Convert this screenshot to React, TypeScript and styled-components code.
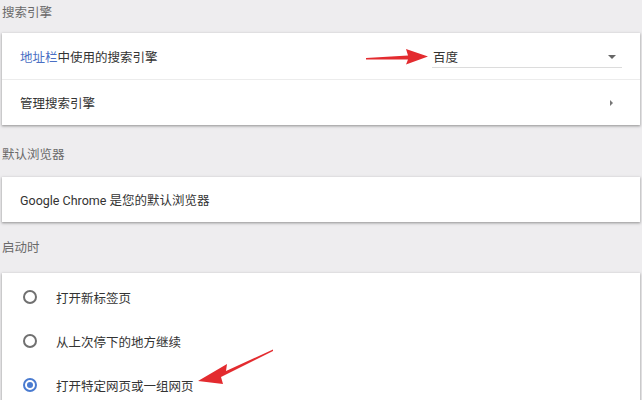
import React from 'react';
import styled, { createGlobalStyle } from 'styled-components';

const GlobalStyle = createGlobalStyle`
  html, body {
    margin: 0;
    padding: 0;
    background: #eeedef;
    overflow: hidden;
  }
  body {
    font-family: Roboto, "Noto Sans CJK SC", sans-serif;
    font-size: 12.5px;
    color: #333;
  }
`;

const Page = styled.div`
  position: relative;
  width: 642px;
  height: 400px;
  padding: 0 2px;
  box-sizing: border-box;
  overflow: hidden;
`;

const Heading = styled.div<{ $top: number; $bottom: number }>`
  padding: ${p => p.$top}px 0 ${p => p.$bottom}px 0;
  line-height: 20px;
  color: #6a6a6a;
`;

const Card = styled.div`
  background: #fff;
  box-shadow: 0 1px 2px rgba(0, 0, 0, 0.28), 0 1px 3px 1px rgba(0, 0, 0, 0.1);
`;

const Row = styled.div<{ $h: number; $divider?: boolean }>`
  display: flex;
  align-items: center;
  height: ${p => p.$h}px;
  padding: 0 18px;
  border-top: ${p => (p.$divider ? '1px solid #ececec' : 'none')};
  box-sizing: border-box;
`;

const Label = styled.span`
  flex: 1;
`;

const Link = styled.span`
  color: #4a6fc4;
`;

const Select = styled.div`
  width: 190px;
  height: 22px;
  margin-top: 2px;
  display: flex;
  align-items: center;
  justify-content: space-between;
  padding: 0 0 0 1px;
  border-bottom: 1px solid #dcdcdc;
  box-sizing: border-box;
`;

const Caret = styled.span`
  width: 0;
  height: 0;
  margin-right: 6px;
  border-left: 4px solid transparent;
  border-right: 4px solid transparent;
  border-top: 4px solid #666;
`;

const SubArrow = styled.span`
  width: 0;
  height: 0;
  margin-right: 9px;
  border-top: 3.5px solid transparent;
  border-bottom: 3.5px solid transparent;
  border-left: 3.5px solid #777;
`;

const RadioList = styled(Card)`
  padding-top: 2px;
`;

const RadioRow = styled.div`
  display: flex;
  align-items: center;
  height: 44px;
  padding-left: 21px;
  gap: 19px;
`;

const Radio = styled.span<{ $on?: boolean }>`
  width: 14px;
  height: 14px;
  border-radius: 50%;
  border: 2px solid ${p => (p.$on ? '#4a7bd0' : '#707070')};
  box-sizing: border-box;
  display: flex;
  align-items: center;
  justify-content: center;
  &::after {
    content: '';
    display: ${p => (p.$on ? 'block' : 'none')};
    width: 6px;
    height: 6px;
    border-radius: 50%;
    background: #4a7bd0;
  }
`;

const Annotation = styled.svg`
  position: absolute;
  pointer-events: none;
`;

const RedArrow: React.FC<{ x: number; y: number; w: number; h: number; d: string }> = ({ x, y, w, h, d }) => (
  <Annotation style={{ left: x, top: y }} width={w} height={h} viewBox={`0 0 ${w} ${h}`}>
    <path d={d} fill="#e32b2f" />
  </Annotation>
);

const App: React.FC = () => {
  return (
    <Page>
      <GlobalStyle />
      <Heading $top={3} $bottom={10}>搜索引擎</Heading>
      <Card>
        <Row $h={46}>
          <Label><Link>地址栏</Link>中使用的搜索引擎</Label>
          <Select>
            <span>百度</span>
            <Caret />
          </Select>
        </Row>
        <Row $h={46} $divider>
          <Label>管理搜索引擎</Label>
          <SubArrow />
        </Row>
      </Card>

      <Heading $top={20} $bottom={12}>默认浏览器</Heading>
      <Card>
        <Row $h={45}>
          <Label>Google Chrome 是您的默认浏览器</Label>
        </Row>
      </Card>

      <Heading $top={16} $bottom={15}>启动时</Heading>
      <RadioList>
        <RadioRow><Radio />打开新标签页</RadioRow>
        <RadioRow><Radio />从上次停下的地方继续</RadioRow>
        <RadioRow><Radio $on />打开特定网页或一组网页</RadioRow>
      </RadioList>

      {/* annotation arrows */}
      <RedArrow x={365} y={47} w={64} h={20} d="M1 11 L43 8.5 L41 2 L63 9.5 L41 17.5 L43 12.5 L1 12.5 Z" />
      <RedArrow x={196} y={348} w={78} h={38} d="M77 1.5 L30 23 L31 16 L2 33 L27 36 L25 29 L77 3 Z" />
    </Page>
  );
};

export default App;
